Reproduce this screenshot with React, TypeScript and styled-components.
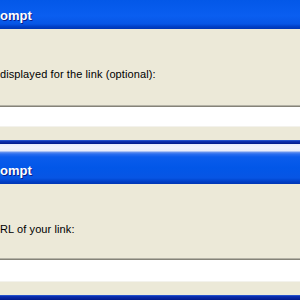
import React from "react";
import styled, { createGlobalStyle } from "styled-components";

const Global = createGlobalStyle`
  html, body { margin: 0; padding: 0; background: #ece9d8; }
  body { width: 300px; height: 300px; overflow: hidden; }
`;

const Page = styled.div`
  display: flex;
  flex-direction: column;
  width: 300px;
  height: 300px;
  overflow: hidden;
`;

const Window = styled.section`
  display: flex;
  flex-direction: column;
`;

const TitleBar = styled.div<{ $h: number; $pad: number; $highlight?: boolean }>`
  height: ${(p) => p.$h}px;
  box-sizing: border-box;
  padding-top: ${(p) => p.$pad}px;
  background: ${(p) =>
    p.$highlight
      ? `linear-gradient(to bottom, #e4eafa 0px, #f0f3fd 3px, #e6ecfb 7px, #6d98ee 8px, #2a6ef0 10px, #0a5cec 13px, #0257e8 60%, #0755e4 85%, #003fc6 94%, #0036b4 100%)`
      : `linear-gradient(to bottom, #0358e8 0%, #0a5ef0 55%, #0756e6 82%, #003fc6 92%, #0036b4 100%)`};
  color: #ffffff;
  font-family: "Liberation Sans", Arial, sans-serif;
  font-weight: bold;
  font-size: 13px;
  line-height: 15px;
  white-space: nowrap;
  text-shadow: 1px 1px 0 #0a1e8a;
`;

const Body = styled.div<{ $h: number }>`
  height: ${(p) => p.$h}px;
  box-sizing: border-box;
  padding-top: 39px;
  background: #ece9d8;
`;

const Label = styled.div`
  font-family: "Liberation Sans", Tahoma, Arial, sans-serif;
  font-size: 11px;
  line-height: 13px;
  letter-spacing: 0.1px;
  color: #000000;
  white-space: nowrap;
`;

const Field = styled.div<{ $h: number }>`
  height: ${(p) => p.$h}px;
  box-sizing: border-box;
  background: #ffffff;
  border-top: 1px solid #b4b2a6;
  box-shadow: inset 0 1px 0 #858378;
  border-bottom: 1px solid #f3f2ec;
`;

const Footer = styled.div<{ $h: number }>`
  height: ${(p) => p.$h}px;
  background: #ece9d8;
`;

const Frame = styled.div<{ $h: number }>`
  height: ${(p) => p.$h}px;
  background: linear-gradient(to bottom, #3d6fdc 0px, #0b33b8 1px, #0a2aa8 2px, #001a8a 100%);
`;

export default function App() {
  return (
    <>
      <Global />
      <Page>
        <Window>
          <TitleBar $h={29} $pad={8}>ompt</TitleBar>
          <Body $h={76}>
            <Label>displayed for the link (optional):</Label>
          </Body>
          <Field $h={22} />
          <Footer $h={13} />
          <Frame $h={4} />
        </Window>
        <Window>
          <TitleBar $h={40} $pad={19} $highlight>
            ompt
          </TitleBar>
          <Body $h={74}>
            <Label>RL of your link:</Label>
          </Body>
          <Field $h={24} />
          <Footer $h={13} />
          <Frame $h={5} />
        </Window>
      </Page>
    </>
  );
}
